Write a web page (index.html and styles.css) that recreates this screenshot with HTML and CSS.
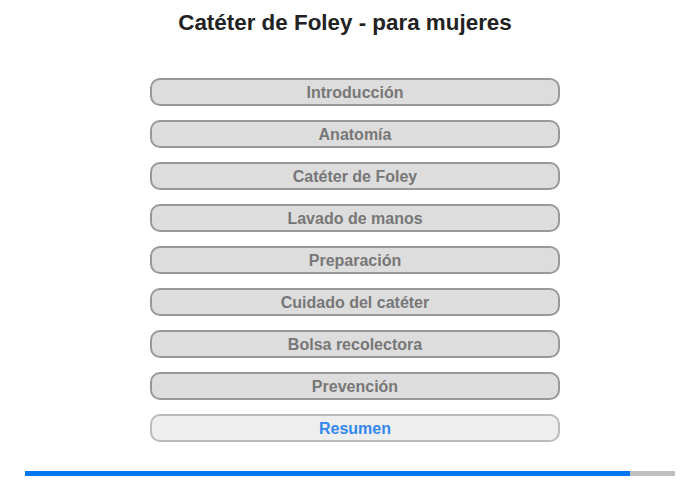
FILE: index.html
```html
<!DOCTYPE html>
<html lang="es">
<head>
<meta charset="utf-8">
<link rel="stylesheet" href="styles.css">
</head>
<body>
<div class="page">
  <h1 class="title">Catéter de Foley - para mujeres</h1>
  <nav class="menu">
    <div class="item">Introducción</div>
    <div class="item">Anatomía</div>
    <div class="item">Catéter de Foley</div>
    <div class="item">Lavado de manos</div>
    <div class="item">Preparación</div>
    <div class="item">Cuidado del catéter</div>
    <div class="item">Bolsa recolectora</div>
    <div class="item">Prevención</div>
    <div class="item current">Resumen</div>
  </nav>
  <div class="progress"><div class="fill" style="width:605px"></div></div>
</div>
</body>
</html>
```
FILE: styles.css
```css
html, body { margin: 0; padding: 0; background: #fff; }
body { font-family: "Liberation Sans", Arial, sans-serif; }
.page { width: 700px; height: 480px; display: flex; flex-direction: column; align-items: center; }
.title { margin: 9px 0 0 0; font-size: 22.4px; font-weight: bold; color: #222; line-height: 28px; transform: translateX(-5px); }
.menu { margin-top: 41px; margin-left: 10px; display: flex; flex-direction: column; gap: 14px; width: 410px; }
.item { box-sizing: border-box; height: 28px; border: 2px solid #999; border-radius: 10px; background: #ddd; color: #777; font-weight: bold; font-size: 16px; line-height: 25px; text-align: center; }
.item.current { background: #eee; border-color: #bbb; color: #3388ee; }
.progress { margin-top: 29px; width: 650px; height: 5px; background: #c0c0c0; display: flex; }
.fill { background: #0077ee; height: 100%; }
```
